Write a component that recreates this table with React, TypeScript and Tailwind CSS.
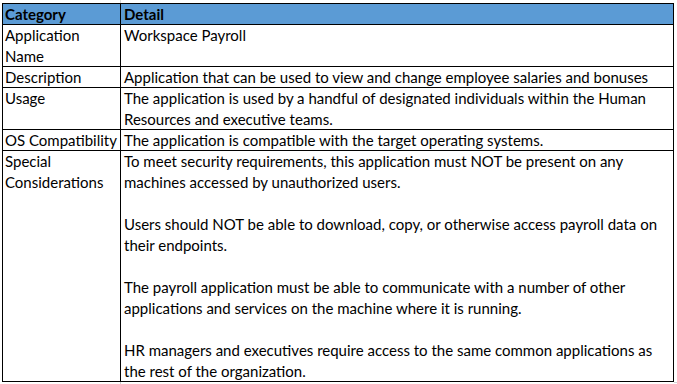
const rows: { category: string[]; detail: string[]; h: string }[] = [
  { category: ["Application", "Name"], detail: ["Workspace Payroll"], h: "h-[41px]" },
  {
    category: ["Description"],
    detail: ["Application that can be used to view and change employee salaries and bonuses"],
    h: "h-[20px]",
  },
  {
    category: ["Usage"],
    detail: [
      "The application is used by a handful of designated individuals within the Human",
      "Resources and executive teams.",
    ],
    h: "h-[41px]",
  },
  {
    category: ["OS Compatibility"],
    detail: ["The application is compatible with the target operating systems."],
    h: "h-[20px]",
  },
  {
    category: ["Special", "Considerations"],
    detail: [
      "To meet security requirements, this application must NOT be present on any",
      "machines accessed by unauthorized users.",
      "",
      "Users should NOT be able to download, copy, or otherwise access payroll data on",
      "their endpoints.",
      "",
      "The payroll application must be able to communicate with a number of other",
      "applications and services on the machine where it is running.",
      "",
      "HR managers and executives require access to the same common applications as",
      "the rest of the organization.",
    ],
    h: "h-[230px]",
  },
];

function Lines({ lines }: { lines: string[] }) {
  return (
    <>
      {lines.map((l, i) => (
        <div key={i} className="h-[21px] whitespace-nowrap">
          {l || "\u00a0"}
        </div>
      ))}
    </>
  );
}

export default function App() {
  return (
    <div
      className="relative w-[677px] h-[384px] bg-white pt-[3px] pl-[2px] text-[15px] leading-[21px] text-black"
      style={{ fontFamily: "Lato, 'Open Sans', sans-serif" }}
    >
      {/* faint sheet gridlines around the table */}
      <div className="absolute left-[120px] top-0 h-[3px] w-px bg-[#d4d4d4]" />
      <div className="absolute left-[120px] bottom-0 h-[2px] w-px bg-[#d4d4d4]" />
      <div className="absolute left-[674px] bottom-[1px] h-px w-[3px] bg-[#d4d4d4]" />

      <div className="w-[672px] border border-black">
        {/* header */}
        <div className="flex h-[21px] border-b border-black bg-[#5b9bd5] font-bold">
          <div className="w-[118px] border-r border-black pl-[2px] leading-[20px]">Category</div>
          <div className="flex-1 pl-[3px] leading-[20px]">Detail</div>
        </div>

        {rows.map((r, i) => (
          <div
            key={i}
            className={`flex border-black ${i < rows.length - 1 ? "border-b" : ""}`}
          >
            <div className={`w-[118px] shrink-0 border-r border-black pl-[2px] ${r.h} overflow-visible`}>
              <Lines lines={r.category} />
            </div>
            <div className={`flex-1 pl-[3px] ${r.h}`}>
              <Lines lines={r.detail} />
            </div>
          </div>
        ))}
      </div>
    </div>
  );
}
